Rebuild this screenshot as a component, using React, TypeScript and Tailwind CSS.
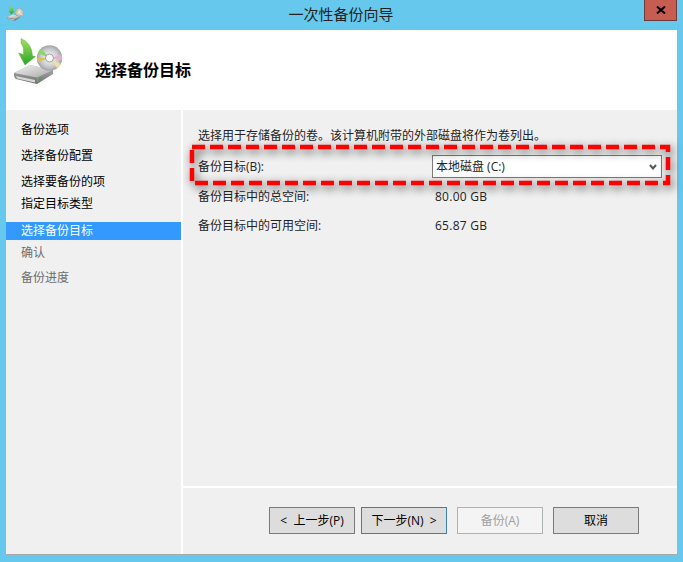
const font = { fontFamily: '"Open Sans", "Noto Sans CJK SC", "Liberation Sans", sans-serif' }

function BackupIcon({ className }: { className: string }) {
  return (
    <svg viewBox="0 0 60 56" className={className}>
      <defs>
        <linearGradient id="plate" x1="0" y1="0" x2="1" y2="1">
          <stop offset="0" stopColor="#f2f2f2" />
          <stop offset="1" stopColor="#a9a9a9" />
        </linearGradient>
        <linearGradient id="front" x1="0" y1="0" x2="0" y2="1">
          <stop offset="0" stopColor="#b5b5b5" />
          <stop offset="1" stopColor="#6f6f6f" />
        </linearGradient>
        <linearGradient id="arrow" x1="0" y1="0" x2="0" y2="1">
          <stop offset="0" stopColor="#a4e05c" />
          <stop offset="1" stopColor="#2aa62a" />
        </linearGradient>
        <radialGradient id="disc" cx="0.5" cy="0.5" r="0.5">
          <stop offset="0.3" stopColor="#e9e9e9" />
          <stop offset="0.75" stopColor="#c2c4c8" />
          <stop offset="1" stopColor="#9fa1a5" />
        </radialGradient>
      </defs>
      <path d="M4 39 L20 31 L43 36 L43 40 L27 50 L6 45 Q3.500 43 4 39 Z" fill="url(#front)" />
      <path d="M4 39 L20 31 L43 36 L27 43.500 Z" fill="url(#plate)" />
      <path d="M6 42 L25 46 L25 48.500 L7 44.500 Z" fill="#d8d8d8" />
      <rect x="27" y="44" width="1.500" height="4" fill="#3fc83f" />
      <circle cx="39.500" cy="24" r="12.700" fill="url(#disc)" />
      <path d="M39.500 24 L28 19 A12.700 12.700 0 0 1 31 14.500 Z" fill="#8fd46f" />
      <path d="M39.500 24 L28 28 A12.700 12.700 0 0 1 27 24 Z" fill="#d8c25c" />
      <path d="M39.500 24 L51.500 21 A12.700 12.700 0 0 1 52 26 Z" fill="#e3b2cc" />
      <path d="M39.500 24 L51 30 A12.700 12.700 0 0 1 47 34 Z" fill="#e8e2a8" />
      <circle cx="39.500" cy="24" r="4" fill="#f7f7f7" stroke="#8d8d8d" strokeWidth="0.8" />
      <path d="M11 4.500 Q22 9 22.500 22 L25.500 22.500 L15 31 L8.500 19 L13.500 20.500 Q14 12 11 9.500 Z" fill="url(#arrow)" stroke="#4aa63a" strokeWidth="0.4" />
    </svg>
  )
}

function WizardButton({ label, tone = 'normal' }: { label: string; tone?: 'normal' | 'focus' | 'disabled' }) {
  const styles = {
    normal: 'border-[#7a7a7a] bg-[#dddddd] text-black',
    focus: 'border-[#3c7fb1] bg-[#dddddd] text-black',
    disabled: 'border-[#adb2b5] bg-[#f4f4f4] text-[#a0a0a0]',
  }
  return (
    <div className={`w-[86px] h-[27px] border flex items-center justify-center text-[12px] whitespace-pre ${styles[tone]}`}>
      {label}
    </div>
  )
}

export default function App() {
  const steps = [
    { label: '备份选项', cls: 'h-[26px] text-black' },
    { label: '选择备份配置', cls: 'h-[26px] text-black' },
    { label: '选择要备份的项', cls: 'h-[26px] text-black' },
    { label: '指定目标类型', cls: 'h-[18px] text-black' },
    { label: '选择备份目标', cls: 'h-[18px] mt-[9px] bg-[#3399ff] text-white' },
    { label: '确认', cls: 'h-[25px] text-[#6d6d6d]' },
    { label: '备份进度', cls: 'h-[26px] text-[#6d6d6d]' },
  ]

  return (
    <div style={font} className="w-[683px] h-[562px] bg-[#66c8ec] flex flex-col overflow-hidden">
      {/* title bar */}
      <div className="h-[30px] shrink-0 flex items-start relative">
        <BackupIcon className="w-[20px] h-[19px] ml-[6px] mt-[4px]" />
        <div className="flex-1 text-center text-[15px] text-[#222222] mt-[4px] pl-[12px] leading-[20px]">一次性备份向导</div>
        <div className="w-[33px] h-[21px] mr-[6px] bg-[#c75c50] border border-[#6e3a3a] border-t-0 flex items-center justify-center">
          <svg viewBox="0 0 10 8" className="w-[10px] h-[8px]">
            <path d="M1 0.5 L9 7.5 M9 0.5 L1 7.5" stroke="#000" strokeWidth="2" />
          </svg>
        </div>
      </div>

      <div className="mx-[6px] h-[525px] flex flex-col bg-[#f0f0f0] border-b border-[#a9a9a9]">
        {/* header */}
        <div className="h-[80px] shrink-0 bg-white flex items-start">
          <BackupIcon className="w-[60px] h-[56px] ml-[4px] mt-[4px]" />
          <div className="ml-[25px] mt-[29px] text-[16px] leading-[22px] font-bold text-black">选择备份目标</div>
        </div>

        <div className="flex-1 flex min-h-0">
          {/* step list */}
          <div className="w-[175px] shrink-0 pt-[7px]">
            {steps.map((s) => (
              <div key={s.label} className={`flex items-center pl-[15px] text-[12px] ${s.cls}`}>
                {s.label}
              </div>
            ))}
          </div>
          <div className="w-[2px] shrink-0 bg-white" />

          <div className="flex-1 flex flex-col min-w-0">
            <div className="flex-1 text-[12px] text-[#222222] relative pl-[15px] pt-[17px]">
              <div className="h-[18px] leading-[18px]">选择用于存储备份的卷。该计算机附带的外部磁盘将作为卷列出。</div>

              <div className="flex items-center h-[23px] mt-[10px]">
                <div className="w-[234px]">备份目标(B):</div>
                <div className="w-[230px] h-[23px] bg-white border border-[#7a7a7a] flex items-center justify-between pl-[3px] pr-[4px]">
                  <span>本地磁盘 (C:)</span>
                  <svg viewBox="0 0 8 6" className="w-[8px] h-[6px]">
                    <path d="M1 1 L4 4.500 L7 1" stroke="#555555" strokeWidth="2" fill="none" />
                  </svg>
                </div>
              </div>

              <div className="flex items-center h-[18px] mt-[10px]">
                <div className="w-[237px]">备份目标中的总空间:</div>
                <div className="tracking-[0.25px]">80.00 GB</div>
              </div>
              <div className="flex items-center h-[18px] mt-[11px]">
                <div className="w-[237px]">备份目标中的可用空间:</div>
                <div className="tracking-[0.25px]">65.87 GB</div>
              </div>

              {/* red callout over the row */}
              <svg className="absolute left-[7px] top-[35px] w-[480px] h-[40px] overflow-visible drop-shadow-[2px_3px_5px_rgba(0,0,0,0.7)]" viewBox="0 0 480 40">
                <rect x="2" y="2" width="476" height="36" fill="none" stroke="#ff0000" strokeWidth="4.500" strokeDasharray="13 5" />
              </svg>
            </div>

            {/* footer */}
            <div className="h-[68px] shrink-0 border-t-2 border-white flex items-start pt-[19px] pl-[86px]">
              <WizardButton label="<  上一步(P)" />
              <div className="ml-[6px]">
                <WizardButton label="下一步(N)  >" tone="focus" />
              </div>
              <div className="ml-[10px]">
                <WizardButton label="备份(A)" tone="disabled" />
              </div>
              <div className="ml-[10px]">
                <WizardButton label="取消" />
              </div>
            </div>
          </div>
        </div>
      </div>
    </div>
  )
}
